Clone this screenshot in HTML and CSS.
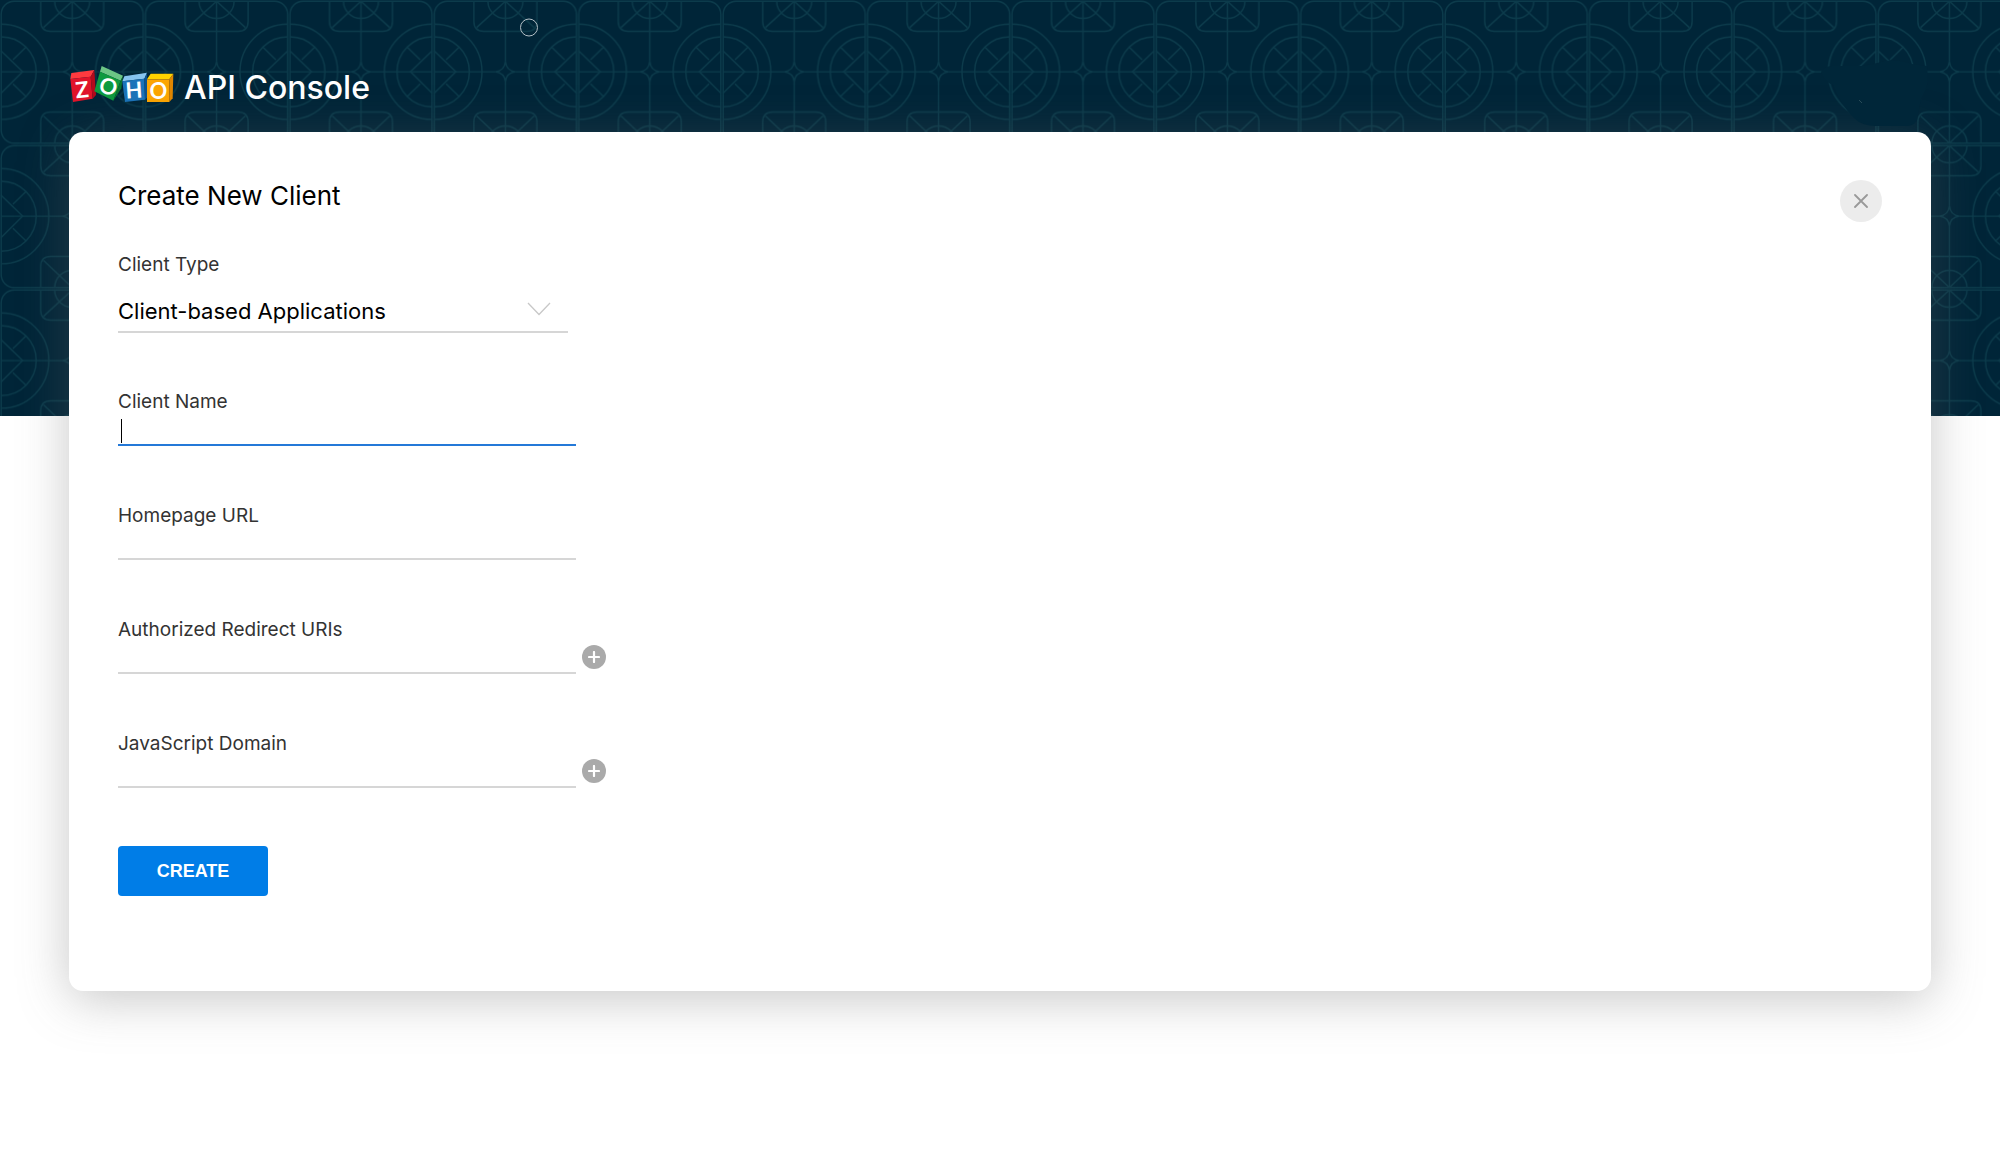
FILE: index.html
```html
<!DOCTYPE html>
<html lang="en">
<head>
<meta charset="utf-8">
<title>Zoho API Console</title>
<link rel="stylesheet" href="styles.css">
</head>
<body>
<div class="page">
  <svg class="backdrop" aria-hidden="true">
    <defs>
      <pattern id="tile" width="144.4" height="144.4" patternUnits="userSpaceOnUse">
        <g fill="none" stroke="#0c3b4b" stroke-width="1.4">
          <rect x="1.2" y="1.2" width="142" height="142" rx="13"/>
          <path d="M1.2 71.8H62.2M82.2 71.8H143.2M72.2 1.2V61.5M72.2 81.5V143.2"/>
          <path d="M72.2 61.5Q71.2 70.8 62.2 71.8Q71.2 72.8 72.2 81.5Q73.2 72.8 82.2 71.8Q73.2 70.8 72.2 61.5Z"/>
          <path d="M1.2 24.2A47.6 47.6 0 0 1 1.2 119.4M1.2 36.8A35 35 0 0 1 1.2 106.8M1.2 51L22.7 71.8L1.2 93M13 59.8L25.5 47.5M13 83.8L25.5 96"/>
          <path d="M143.2 24.2A47.6 47.6 0 0 0 143.2 119.4M143.2 36.8A35 35 0 0 0 143.2 106.8M143.2 51L121.7 71.8L143.2 93M131.4 59.8L118.9 47.5M131.4 83.8L118.9 96"/>
          <path d="M40.7 1.2V21.5Q40.7 31.4 50.7 31.4H93.7Q103.7 31.4 103.7 21.5V1.2M54.7 1.2A17.5 17.3 0 0 0 89.7 1.2M72.2 1.2L43.5 27.5M72.2 1.2L100.9 27.5"/>
          <path d="M40.7 143.2V122Q40.7 112 50.7 112H93.7Q103.7 112 103.7 122V143.2M54.7 143.2A17.5 17.3 0 0 1 89.7 143.2M72.2 143.2L43.5 116M72.2 143.2L100.9 116"/>
        </g>
      </pattern>
    </defs>
    <rect width="100%" height="100%" fill="#002538"/>
    <rect width="100%" height="100%" fill="url(#tile)"/>
    <circle cx="529" cy="27.5" r="8.5" fill="none" stroke="#b4c0c6"/>
  </svg>

  <header class="header">
    <svg class="logo" viewBox="6 8 318 114" role="img" aria-label="Zoho">
      <path fill="#ff3a3f" d="M10 50L13 32L82 23L71 43Z"/>
      <path fill="#e0142a" d="M10 50L71 43L77 109L18 119Z"/>
      <path fill="#b30a1c" d="M71 43L82 23L87 98L77 109Z"/>
      <path fill="#6cc585" d="M99 28L104 11L168 40L161 55Z"/>
      <path fill="#0e9a3f" d="M99 28L161 55L139 115L82 87Z"/>
      <path fill="#0a7630" d="M161 55L168 40L163 78L139 115Z"/>
      <path fill="#86c4ef" d="M166 57L172 42L240 31L232 49Z"/>
      <path fill="#1b73b9" d="M166 57L232 49L234 112L174 119Z"/>
      <path fill="#0d5490" d="M232 49L240 31L242 104L234 112Z"/>
      <path fill="#ffd400" d="M240 51L251 34H319L307 51Z"/>
      <path fill="#fca503" d="M240 51H307V119H240Z"/>
      <path fill="#e08600" d="M307 51L319 34L317 108L307 119Z"/>
      <g class="logo-letters">
        <text x="45" y="106" transform="rotate(-6 45 82)">Z</text>
        <text x="124" y="96" transform="rotate(18 124 73)">O</text>
        <text x="201" y="107" transform="rotate(-4 201 84)">H</text>
        <text x="274" y="109">O</text>
      </g>
    </svg>
    <h1 class="brand">API Console</h1>
  </header>

  <svg class="cover" viewBox="0 0 110 68" aria-hidden="true">
    <path fill="#002639" d="M1 13Q5 6 14 7L42 7Q55 5 65 2Q80 0 92 5L107 7L108 22Q106 32 101 40L97 61Q94 67 86 67H56Q42 67 34 59Q20 45 13 26Q3 22 1 13Z"/>
    <path stroke="#284b58" d="M39 41L42 44"/>
  </svg>

  <main class="card">
    <div class="card-head">
      <h2 class="title">Create New Client</h2>
      <button class="close" type="button" aria-label="Close">
        <svg width="14" height="14" viewBox="0 0 14 14"><path d="M1 1L13 13M13 1L1 13" fill="none" stroke="#999" stroke-width="1.8" stroke-linecap="round"/></svg>
      </button>
    </div>
    <form class="form">
      <div class="field">
        <label for="type">Client Type</label>
        <div class="select-wrap">
          <select id="type"><option>Client-based Applications</option></select>
          <svg class="chevron" width="24" height="14" viewBox="0 0 24 14" aria-hidden="true"><path d="M1 1L12 12.5L23 1" fill="none" stroke="#c8c8c8" stroke-width="1.3"/></svg>
        </div>
      </div>
      <div class="field">
        <label for="name">Client Name</label>
        <div class="row"><input class="active" id="name" type="text"><span class="caret"></span></div>
      </div>
      <div class="field">
        <label for="home">Homepage URL</label>
        <div class="row"><input id="home" type="text"></div>
      </div>
      <div class="field">
        <label for="redirect">Authorized Redirect URIs</label>
        <div class="row"><input id="redirect" type="text">
          <button class="add" type="button" aria-label="Add redirect URI"><svg width="12" height="12" viewBox="0 0 12 12"><path d="M6 1V11M1 6H11" stroke="#fff" stroke-width="2.2" stroke-linecap="round"/></svg></button>
        </div>
      </div>
      <div class="field">
        <label for="domain">JavaScript Domain</label>
        <div class="row"><input id="domain" type="text">
          <button class="add" type="button" aria-label="Add JavaScript domain"><svg width="12" height="12" viewBox="0 0 12 12"><path d="M6 1V11M1 6H11" stroke="#fff" stroke-width="2.2" stroke-linecap="round"/></svg></button>
        </div>
      </div>
      <button class="create" type="button">CREATE</button>
    </form>
  </main>
</div>
</body>
</html>
```
FILE: styles.css
```css
* {
  box-sizing: border-box;
}

body {
  margin: 0;
  background: #fff;
  color: #000;
  font-family: Inter, "Open Sans", sans-serif;
}

.page {
  position: relative;
  padding: 0 69px 64px;
}

.backdrop {
  position: absolute;
  top: 0;
  left: 0;
  width: 100%;
  height: 416px;
}

.header {
  position: relative;
  display: flex;
  align-items: center;
  gap: 9px;
  height: 132px;
  padding-top: 36px;
}

.logo {
  width: 106px;
  height: 38px;
}

.logo-letters {
  fill: #fff;
  font: 700 66px Lato, sans-serif;
  text-anchor: middle;
}

.brand {
  margin: 0;
  padding-top: 8px;
  color: #fff;
  font-size: 32px;
  font-weight: 500;
  line-height: 40px;
}

.cover {
  position: absolute;
  top: 59px;
  right: 70px;
  width: 110px;
  height: 68px;
  z-index: 1;
}

.card {
  position: relative;
  padding: 48px 49px 95px;
  border-radius: 14px;
  background: #fff;
  box-shadow: 0 8px 50px rgba(100, 100, 100, 0.36);
}

.card-head {
  display: flex;
  align-items: flex-start;
  justify-content: space-between;
  margin-bottom: 31px;
}

.title {
  margin: 0;
  font-size: 26px;
  font-weight: 400;
  line-height: 32px;
}

.close {
  display: grid;
  place-items: center;
  width: 42px;
  height: 42px;
  padding: 0;
  border: 0;
  border-radius: 50%;
  background: #ececec;
}

.form {
  display: flex;
  flex-direction: column;
  align-items: flex-start;
  gap: 57px;
}

.field {
  display: flex;
  flex-direction: column;
}

label {
  color: #333;
  font-size: 19px;
  line-height: 24px;
}

.select-wrap {
  display: grid;
  align-items: center;
  width: 450px;
  margin-top: 13px;
}

.select-wrap > * {
  grid-area: 1 / 1;
}

select {
  appearance: none;
  height: 43px;
  padding: 0;
  border: 0;
  border-bottom: 2px solid #d6d6d6;
  border-radius: 0;
  background: transparent;
  color: #000;
  font: inherit;
  font-size: 22px;
}

.chevron {
  justify-self: end;
  margin-right: 17px;
  margin-bottom: 6px;
  pointer-events: none;
}

.row {
  position: relative;
  display: flex;
  align-items: flex-start;
  gap: 6px;
}

input {
  width: 458px;
  height: 32px;
  padding: 0 3px;
  border: 0;
  border-bottom: 2px solid #d6d6d6;
  outline: 0;
  background: transparent;
  font: inherit;
  font-size: 19px;
}

.row {
  height: 33px;
}

input.active {
  border-bottom-color: #2479d8;
}

.caret {
  position: absolute;
  top: 5px;
  left: 3px;
  width: 1px;
  height: 24px;
  background: #000;
}

.add {
  display: grid;
  place-items: center;
  width: 24px;
  height: 24px;
  margin-top: 3px;
  padding: 0;
  border: 0;
  border-radius: 50%;
  background: #aaa;
}

.create {
  width: 150px;
  height: 50px;
  border: 0;
  border-radius: 4px;
  background: #007de7;
  color: #fff;
  font: bold 18px "Liberation Sans", Arial, sans-serif;
}
```
